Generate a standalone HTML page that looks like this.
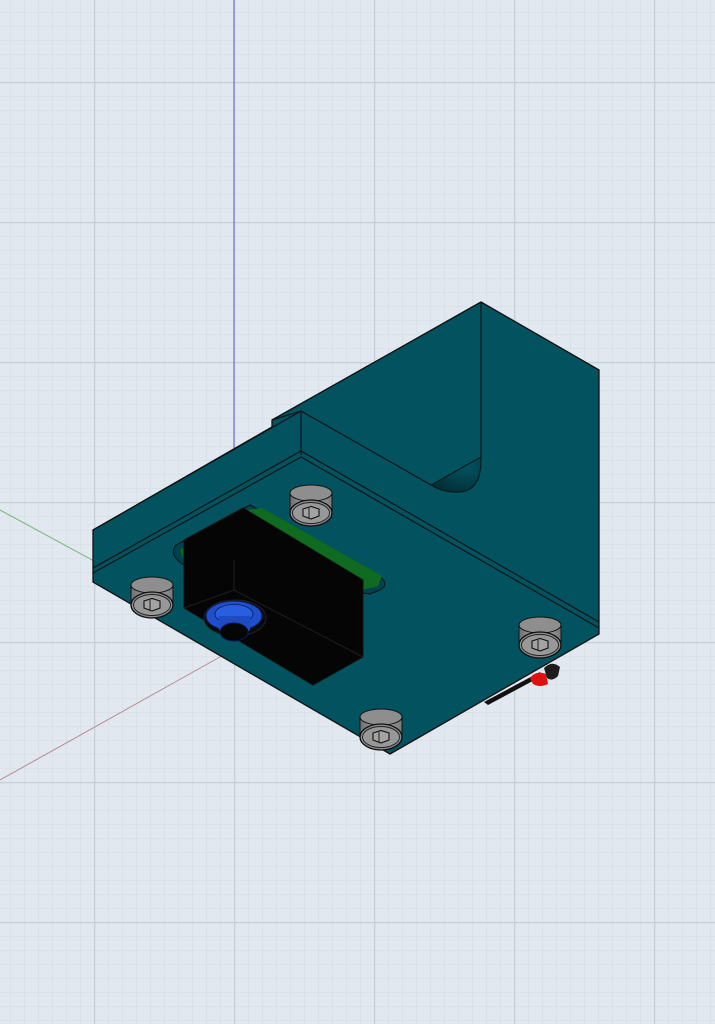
<!DOCTYPE html>
<html><head><meta charset="utf-8"><style>
html,body{margin:0;padding:0;background:#e1e8ef;}
svg{display:block}
</style></head><body>
<svg width="715" height="1024" viewBox="0 0 715 1024" xmlns="http://www.w3.org/2000/svg">
<defs>
<pattern id="minor" x="10" y="12" width="14" height="14" patternUnits="userSpaceOnUse">
<path d="M0 0V14M0 0H14" stroke="#d2dae3" stroke-width="1" fill="none"/>
</pattern>
<pattern id="major" x="94" y="82" width="140" height="140" patternUnits="userSpaceOnUse">
<path d="M0.5 0V140M0 0.5H140" stroke="#c6ced7" stroke-width="1.5" fill="none"/>
</pattern>
<radialGradient id="cone" cx="0.7" cy="0.3" r="0.9"><stop offset="0" stop-color="#02525f"/><stop offset="1" stop-color="#012a30"/></radialGradient>
<linearGradient id="scr" x1="0" x2="1"><stop offset="0" stop-color="#6e6e6e"/><stop offset="0.5" stop-color="#b0b0b0"/><stop offset="1" stop-color="#7a7a7a"/></linearGradient>
<g id="screw">
<rect x="-21" y="-12" width="42" height="20" fill="url(#scr)" stroke="#111" stroke-width="1"/>
<ellipse cx="0" cy="-12" rx="21" ry="8" fill="#8e8e8e" stroke="#111" stroke-width="1"/>
<ellipse cx="0" cy="8" rx="21" ry="13" fill="#8a8a8a" stroke="#111" stroke-width="1.3"/>
<ellipse cx="0" cy="8" rx="18.5" ry="10.5" fill="#989898" stroke="#222" stroke-width="0.9"/>
<path d="M-8 4 L0 1.5 L8 4 L8 11 L0 14 L-8 11Z" fill="#a3a3a3" stroke="#111" stroke-width="1.1"/>
<path d="M-2 3V13" stroke="#111" stroke-width="0.9"/>
</g>
</defs>
<rect width="715" height="1024" fill="#e1e8ef"/>
<rect width="715" height="1024" fill="url(#minor)"/>
<rect width="715" height="1024" fill="url(#major)"/>
<line x1="234" y1="0" x2="234" y2="450" stroke="#7b7bc4" stroke-width="1.3"/>
<line x1="0" y1="510" x2="236" y2="638" stroke="#7cb87c" stroke-width="1"/>
<line x1="0" y1="780" x2="236" y2="648" stroke="#b88a92" stroke-width="1"/>
<!-- red/black bits -->
<path d="M484 702 L540 672 L542 676 L488 705Z" fill="#111"/>
<path d="M530 678 Q536 670 546 674 L548 684 Q540 688 533 684Z" fill="#e01010"/>
<path d="M544 668 Q552 660 560 667 L558 676 Q552 682 547 678Z" fill="#1c1c1c"/>
<!-- main body -->
<path d="M93 530 L272 427 L272 420 L481 302 L599 370 L599 634 L390 754 L93 582Z" fill="#02525f" stroke="#111" stroke-width="1.3" stroke-linejoin="round"/>
<g stroke="#111" stroke-width="1.1" fill="none">
<path d="M272 420 L301 411 L301 455"/>
<path d="M93 530 L301 411"/>
<path d="M301 411 L431 485"/>
<path d="M481 302 L481 457"/>
<path d="M93 568 L301 451 L599 622"/>
<path d="M93 573 L301 457 L599 628"/>
</g>
<path d="M431 485 L481 457 Q482 494 455 492 Q442 492 431 485Z" fill="url(#cone)" stroke="#111" stroke-width="1"/>
<!-- slot + green board -->
<path d="M176 545 L250 505 L380 577 Q390 584 380 590 L370 594 L184 565 Q168 555 176 545Z" fill="#02424c" stroke="#111" stroke-width="1"/>
<path d="M180 550 L248 510 L262 508 L382 576 L378 586 L362 590 L184 560Z" fill="#0e6b1f"/>
<!-- black servo -->
<path d="M184 540 L243 508 L363 580 L363 657 L313 685 L184 608Z" fill="#050505" stroke="#111" stroke-width="1"/>
<path d="M234 560 L234 590 L184 608 M234 590 L363 657" stroke="#1e1e1e" stroke-width="1" fill="none"/>
<!-- knob -->
<ellipse cx="235" cy="618" rx="31" ry="18" fill="#0a0a0a" stroke="#222" stroke-width="1"/>
<ellipse cx="234" cy="616" rx="28" ry="15" fill="#1f4fcc" stroke="#0a1a55" stroke-width="1"/>
<ellipse cx="234" cy="614" rx="19" ry="9.5" fill="#2a5ee0" stroke="#0a1a55" stroke-width="0.8"/>
<path d="M219 616 L219 630 Q234 644 250 630 L250 616Z" fill="#1e4bc2"/>
<ellipse cx="234" cy="632" rx="14" ry="9" fill="#050505" stroke="#0a1a55" stroke-width="1"/>
<!-- screws -->
<use href="#screw" x="152" y="597"/>
<use href="#screw" x="311" y="505"/>
<use href="#screw" x="540" y="637"/>
<use href="#screw" x="381" y="729"/>
</svg>
</body></html>
